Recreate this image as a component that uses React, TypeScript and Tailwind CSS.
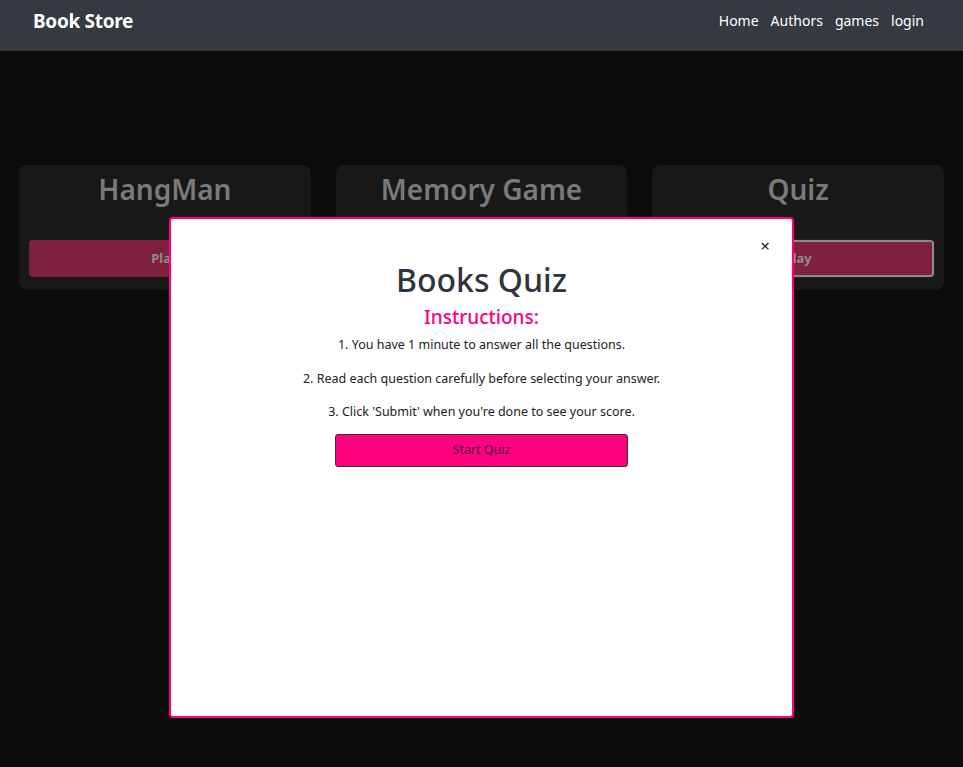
import React from "react";

const font = { fontFamily: '"Noto Sans", "Open Sans", sans-serif' };

function Card({ title, hl }: { title: string; hl?: boolean }) {
  return (
    <div className="bg-[#181818] rounded-lg flex flex-col items-center px-[10px] pt-[6px] pb-[13px]">
      <h2 className="text-[28px] font-semibold text-[#7a7a7a] leading-[36px]">{title}</h2>
      <button
        className={`mt-[33px] w-full h-[37px] rounded bg-[#802040] text-[#8c8c8c] text-[13px] font-bold ${
          hl ? "outline outline-2 outline-[#8a8a8a] -outline-offset-2 ring-1 ring-[#222]" : ""
        }`}
      >
        Play
      </button>
    </div>
  );
}

export default function App() {
  return (
    <div style={font} className="relative min-h-[767px] bg-[#0b0b0b]">
      <nav className="h-[51px] bg-[#343a40] flex items-start justify-between pl-[33px] pr-[39px] pt-[8px]">
        <span className="text-white text-[19px] font-bold tracking-[-0.3px] leading-[26px]">Book Store</span>
        <div className="flex gap-[12px] text-white text-[14px] leading-[26px]">
          <a>Home</a>
          <a>Authors</a>
          <a>games</a>
          <a>login</a>
        </div>
      </nav>
      <main className="px-[19px] pt-[114px]">
        <div className="grid grid-cols-3 gap-[25px]">
          <Card title="HangMan" />
          <Card title="Memory Game" />
          <Card title="Quiz" hl />
        </div>
      </main>
      <div className="absolute left-[169px] top-[217px] w-[625px] h-[501px] bg-white border-2 border-[#ff0080] rounded-[4px] flex flex-col items-center">
        <button className="absolute right-[22px] top-[18px] text-[#222] text-[17px] leading-none">×</button>
        <h1 className="mt-[41px] text-[32px] font-medium text-[#2f353b] leading-[40px]">Books Quiz</h1>
        <h3 className="mt-[4px] text-[19px] font-medium text-[#ff0080] leading-[26px]">Instructions:</h3>
        <p className="mt-[6px] text-[12.5px] text-[#222] leading-[18px]">1. You have 1 minute to answer all the questions.</p>
        <p className="mt-[16px] text-[12.5px] text-[#222] leading-[18px]">2. Read each question carefully before selecting your answer.</p>
        <p className="mt-[15px] text-[12.5px] text-[#222] leading-[18px]">3. Click 'Submit' when you're done to see your score.</p>
        <button className="mt-[13px] w-[293px] h-[33px] bg-[#ff0080] border border-[#333] rounded-[3px] text-[12.5px] text-[#4a1030]">
          Start Quiz
        </button>
      </div>
    </div>
  );
}
